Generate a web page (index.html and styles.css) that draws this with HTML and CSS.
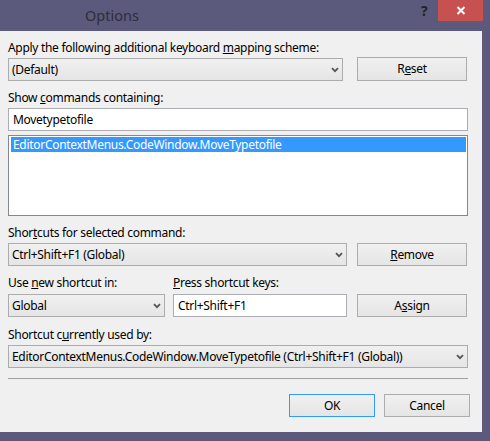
FILE: index.html
```html
<!DOCTYPE html>
<html>
<head>
<meta charset="utf-8">
<link rel="stylesheet" href="styles.css">
</head>
<body>
<div class="window">
  <div class="titlebar">
    <div class="title">Options</div>
    <div class="help">?</div>
    <div class="close">
      <svg width="10" height="9" viewBox="0 0 10 9"><path d="M1.5 1 L8.5 8 M8.5 1 L1.5 8" stroke="#fff" stroke-width="2" fill="none"/></svg>
    </div>
  </div>
  <div class="content">
    <div class="label l1">Apply the following additional keyboard <u>m</u>apping scheme:</div>
    <div class="row r1">
      <div class="combo c1"><span>(Default)</span><svg class="chev" width="8" height="6" viewBox="0 0 8 6"><path d="M1 1.2 L4 4.2 L7 1.2" stroke="#555" stroke-width="1.8" fill="none"/></svg></div>
      <div class="btn">R<u>e</u>set</div>
    </div>
    <div class="label l2">Show <u>c</u>ommands containing:</div>
    <div class="input full">Movetypetofile</div>
    <div class="listbox">
      <div class="item sel">EditorContextMenus.CodeWindow.MoveTypetofile</div>
    </div>
    <div class="label l3">Shor<u>t</u>cuts for selected command:</div>
    <div class="row r2">
      <div class="combo c2"><span>Ctrl+Shift+F1 (Global)</span><svg class="chev" width="8" height="6" viewBox="0 0 8 6"><path d="M1 1.2 L4 4.2 L7 1.2" stroke="#555" stroke-width="1.8" fill="none"/></svg></div>
      <div class="btn"><u>R</u>emove</div>
    </div>
    <div class="row labels">
      <div class="label lcol1">Use <u>n</u>ew shortcut in:</div>
      <div class="label lcol2"><u>P</u>ress shortcut keys:</div>
    </div>
    <div class="row r3">
      <div class="combo c3"><span>Global</span><svg class="chev" width="8" height="6" viewBox="0 0 8 6"><path d="M1 1.2 L4 4.2 L7 1.2" stroke="#555" stroke-width="1.8" fill="none"/></svg></div>
      <div class="input keys">Ctrl+Shift+F1</div>
      <div class="btn">A<u>s</u>sign</div>
    </div>
    <div class="label l4">Shortcut c<u>u</u>rrently used by:</div>
    <div class="combo c4"><span>EditorContextMenus.CodeWindow.MoveTypetofile (Ctrl+Shift+F1 (Global))</span><svg class="chev" width="8" height="6" viewBox="0 0 8 6"><path d="M1 1.2 L4 4.2 L7 1.2" stroke="#555" stroke-width="1.8" fill="none"/></svg></div>
    <div class="sep"></div>
    <div class="row footer">
      <div class="btn ok">OK</div>
      <div class="btn cancel">Cancel</div>
    </div>
  </div>
</div>
</body>
</html>
```

FILE: styles.css
```css
* { box-sizing: border-box; }
html, body { margin: 0; padding: 0; }
body {
  width: 490px;
  height: 441px;
  overflow: hidden;
  font-family: "Noto Sans", "Open Sans", sans-serif;
  font-size: 12px;
  letter-spacing: -0.3px;
  color: #000;
}
u { text-decoration: underline; text-underline-offset: 1px; }
.window {
  width: 490px;
  height: 441px;
  background: #5b5a7c;
  display: flex;
  flex-direction: column;
}
.titlebar {
  height: 31px;
  display: flex;
  align-items: flex-start;
  flex: none;
}
.title {
  margin-left: 85px;
  margin-top: 6px;
  font-size: 14.5px;
  line-height: 18px;
  letter-spacing: 0;
  color: #2e2d3a;
}
.help {
  margin-left: auto;
  margin-top: 2px;
  font-size: 14px;
  font-weight: bold;
  line-height: 18px;
  color: #222;
  width: 17px;
  text-align: left;
}
.close {
  width: 45px;
  height: 21px;
  background: #c75050;
  margin-right: 7px;
  display: flex;
  align-items: center;
  justify-content: center;
}
.content {
  width: 482px;
  height: 401px;
  background: #f0f0f0;
  padding: 9px 0 0 8px;
  display: flex;
  flex-direction: column;
  flex: none;
}
.label {
  height: 15px;
  line-height: 15px;
  white-space: nowrap;
}
.row { display: flex; flex: none; }
.combo {
  height: 23px;
  border: 1px solid #acacac;
  background: linear-gradient(#f0f0f0, #e5e5e5);
  display: flex;
  align-items: center;
  padding-left: 3px;
  white-space: nowrap;
  line-height: 20px;
}
.combo span { flex: 1; }
.chev { flex: none; margin-right: 3px; }
.btn {
  width: 110px;
  height: 23px;
  border: 1px solid #acacac;
  background: linear-gradient(#f0f0f0, #e5e5e5);
  display: flex;
  align-items: center;
  justify-content: center;
  line-height: 20px;
}
.input {
  height: 23px;
  border: 1px solid #abadb3;
  background: #fff;
  padding-left: 4px;
  line-height: 21px;
  white-space: nowrap;
}
.l1 { margin-bottom: 2px; }
.r1 { height: 24px; gap: 14px; }
.c1 { width: 335px; margin-top: 1px; }
.r1 .btn { height: 24px; }
.l2 { margin-top: 9px; margin-bottom: 3px; }
.full { width: 460px; }
.listbox {
  width: 460px;
  height: 81px;
  margin-top: 4px;
  border: 1px solid #828790;
  background: #fff;
  padding: 1px 1px 1px 2px;
}
.item {
  height: 15px;
  line-height: 15px;
  padding-left: 2px;
  white-space: nowrap;
}
.sel { background: #3399ff; color: #fff; }
.l3 { margin-top: 9px; margin-bottom: 3px; }
.r2 { gap: 10px; }
.c2 { width: 339px; }
.labels { margin-top: 9px; margin-bottom: 4px; }
.lcol1 { width: 165px; }
.r3 { gap: 8px; }
.c3 { width: 157px; }
.keys { width: 174px; margin-right: 2px; }
.l4 { margin-top: 10px; margin-bottom: 3px; }
.c4 { width: 460px; }
.sep {
  width: 460px;
  height: 1px;
  background: #a0a0a0;
  margin-top: 10px;
  flex: none;
}
.footer { margin-top: 15px; padding-left: 281px; gap: 9px; }
.footer .btn { width: 86px; }
.ok { border-color: #3399ff; }
```
